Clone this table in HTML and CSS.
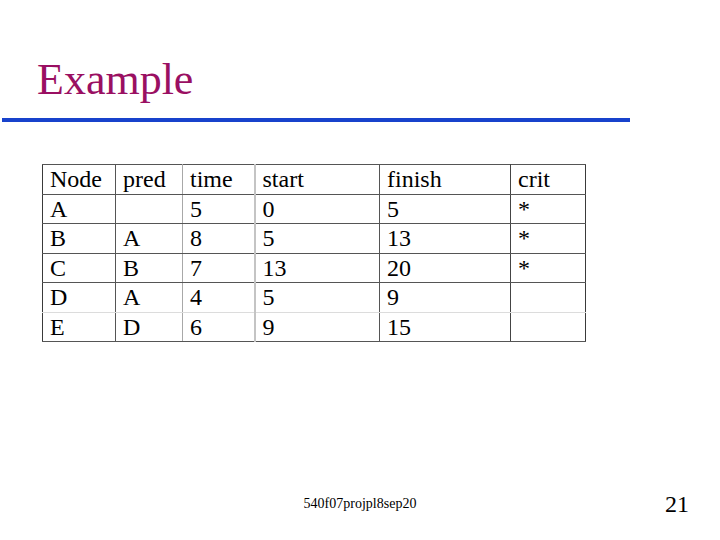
FILE: index.html
```html
<!DOCTYPE html>
<html>
<head>
<meta charset="utf-8">
<link rel="stylesheet" href="styles.css">
</head>
<body>
<div class="slide">
  <h1 class="title">Example</h1>
  <div class="rule"></div>
  <table class="grid">
    <colgroup>
      <col class="c1"><col class="c2"><col class="c3"><col class="c4"><col class="c5"><col class="c6">
    </colgroup>
    <tr><td class="v1">Node</td><td class="v2">pred</td><td class="v3">time</td><td class="v4">start</td><td class="v5">finish</td><td>crit</td></tr>
    <tr><td class="v1">A</td><td class="v2"></td><td class="v3">5</td><td class="v4">0</td><td class="v5">5</td><td>*</td></tr>
    <tr><td class="v1">B</td><td class="v2">A</td><td class="v3">8</td><td class="v4">5</td><td class="v5">13</td><td>*</td></tr>
    <tr><td class="v1">C</td><td class="v2">B</td><td class="v3">7</td><td class="v4">13</td><td class="v5">20</td><td>*</td></tr>
    <tr class="soft"><td class="v1">D</td><td class="v2">A</td><td class="v3">4</td><td class="v4">5</td><td class="v5">9</td><td></td></tr>
    <tr><td class="v1">E</td><td class="v2">D</td><td class="v3">6</td><td class="v4">9</td><td class="v5">15</td><td></td></tr>
  </table>
  <footer class="foot">
    <span></span>
    <span class="note">540f07projpl8sep20</span>
    <span class="page">21</span>
  </footer>
</div>
</body>
</html>
```
FILE: styles.css
```css
html, body {
  margin: 0;
  padding: 0;
  background: #ffffff;
}
.slide {
  width: 720px;
  height: 540px;
  display: flex;
  flex-direction: column;
  font-family: "Liberation Serif", "Times New Roman", serif;
  color: #000;
}
.title {
  margin: 0;
  padding: 58px 0 0 37px;
  font-size: 44px;
  line-height: 44px;
  font-weight: normal;
  color: #9a0f62;
}
.rule {
  margin: 16px 0 0 2px;
  width: 628px;
  height: 4px;
  background: #1842cc;
}
.grid {
  margin: 42px 0 0 42px;
  width: 543px;
  table-layout: fixed;
  border-collapse: collapse;
  border: 1px solid #3a3a3a;
  font-size: 24px;
}
.c1 { width: 73px; }
.c2 { width: 67px; }
.c3 { width: 72px; }
.c4 { width: 125px; }
.c5 { width: 131px; }
.c6 { width: 75px; }
.grid tr { height: 29.5px; }
.grid td {
  padding: 0 0 0 7px;
  line-height: 28px;
  vertical-align: middle;
  border-top: 1px solid #555;
  border-bottom: 1px solid #555;
  white-space: nowrap;
}
.grid tr.soft td { border-bottom-color: #dcdcdc; }
.grid td.v1 { border-right: 1px solid #555; }
.grid td.v2 { border-right: 1px solid #a8a8a8; }
.grid td.v3 { border-right: 2px solid #c4c4c4; }
.grid td.v4 { border-right: 1px solid #555; }
.grid td.v5 { border-right: 1px solid #444; }
.foot {
  margin-top: auto;
  height: 28px;
  padding: 0 31px 22px 31px;
  display: grid;
  grid-template-columns: 1fr auto 1fr;
  align-items: start;
}
.note {
  padding-top: 6px;
  font-size: 14px;
  line-height: 16px;
}
.page {
  justify-self: end;
  font-size: 24px;
  line-height: 28px;
}
```
